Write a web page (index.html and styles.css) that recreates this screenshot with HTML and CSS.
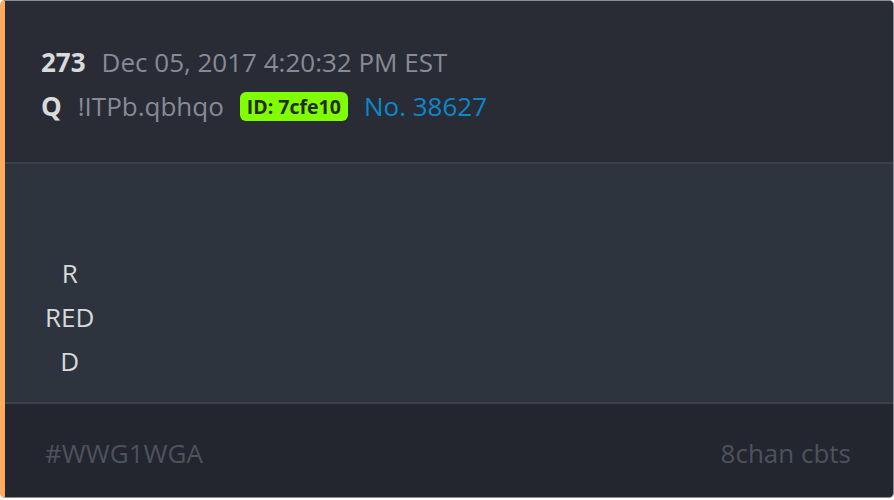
FILE: index.html
```html
<!DOCTYPE html>
<html lang="en">
<head>
  <meta charset="UTF-8" />
  <meta name="viewport" content="width=device-width, initial-scale=1" />
  <title>Post 273</title>
  <link rel="stylesheet" href="styles.css">
</head>
<body>
  <div class="post">
    <div class="post-header">
      <div class="meta-row">
        <span class="post-num">273</span>
        <span class="post-date">Dec 05, 2017 4:20:32 PM EST</span>
      </div>
      <div class="meta-row">
        <span class="author">Q</span>
        <span class="trip">!ITPb.qbhqo</span>
        <span class="id-badge">ID: 7cfe10</span>
        <span class="post-no">No. 38627</span>
      </div>
    </div>

    <div class="post-body">
      <div class="post-text">
        <div>R</div>
        <div>RED</div>
        <div>D</div>
      </div>
    </div>

    <div class="post-footer">
      <span class="tag">#WWG1WGA</span>
      <span class="source">8chan cbts</span>
    </div>
  </div>
</body>
</html>
```

FILE: styles.css
```css
body {
  margin: 0;
  background: #ffffff;
  font-family: "Open Sans", "Noto Sans", sans-serif;
}

.post {
  width: 894px;
  height: 498px;
  box-sizing: border-box;
  display: flex;
  flex-direction: column;
  border: 1px solid #8a8e96;
  border-left: 5px solid #ffa95e;
  border-radius: 5px;
  overflow: hidden;
  background: #23262e;
}

/* ヘッダー：番号・日付・名前 */
.post-header {
  background: #292c35;
  padding: 39px 36px 34px;
  border-bottom: 2px solid #3b404b;
}

.meta-row {
  display: flex;
  align-items: center;
  gap: 16px;
  height: 44px;
  font-size: 26px;
  color: #878b96;
}

.post-num,
.author {
  font-weight: bold;
  color: #d9dadc;
}

.id-badge {
  background: #7fff00;
  color: #262a1f;
  font-size: 19.5px;
  font-weight: bold;
  padding: 1px 7px;
  border-radius: 6px;
  line-height: 27px;
}

.post-no {
  color: #0b88cc;
}

/* 本文 */
.post-body {
  background: #2e343e;
  padding: 87px 40px 0;
  border-bottom: 2px solid #3b404b;
  height: 240px;
  box-sizing: border-box;
}

.post-text {
  display: inline-block;
  text-align: center;
  font-size: 26px;
  line-height: 44px;
  color: #d6d8dc;
}

/* フッター */
.post-footer {
  flex: 1;
  display: flex;
  justify-content: space-between;
  align-items: center;
  padding: 4px 42px 0 40px;
  font-size: 26px;
  color: #4d525e;
}
```
